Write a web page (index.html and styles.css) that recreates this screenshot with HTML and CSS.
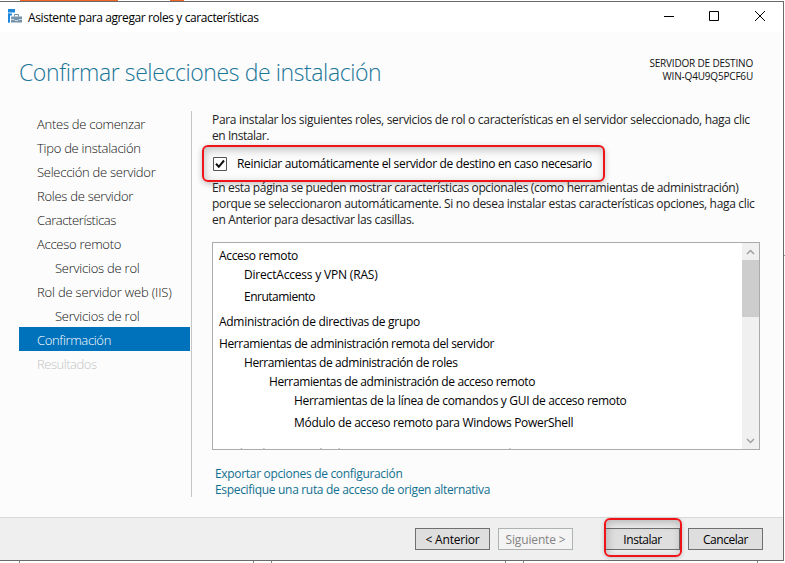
FILE: index.html
```html
<!DOCTYPE html>
<html lang="es">
<head>
<meta charset="utf-8">
<title>Asistente para agregar roles y características</title>
<link rel="stylesheet" href="styles.css">
</head>
<body>
<div class="desktop-top"><i class="tab"></i><i class="dot"></i></div>
<main class="window">
  <header class="titlebar">
    <svg class="app-icon" width="16" height="16" viewBox="0 0 16 16">
      <path d="M1 0h7v3.5h-7zM1 4.5h4v9h-4z" fill="#1f87dc"/>
      <path d="M2.5 6.5h4v-2h6v2h3.500v7.500h-13.500z" fill="#fff"/>
      <path d="M1 4.500h2v9h-2z" fill="#1f87dc"/>
      <path d="M7.500 7.500v-2h4v2" fill="none" stroke="#6f8fa8"/>
      <path d="M4.500 7.500h10.500v6h-11v-4.500z" fill="#7492aa"/>
      <path d="M4 10.500h3l1 1h3l1-1h3" fill="none" stroke="#e6edf2" stroke-width=".8"/>
    </svg>
    <h1 class="caption ls-40">Asistente para agregar roles y características</h1>
    <svg class="controls" width="104" height="12" viewBox="0 0 104 12" fill="none" stroke="#000">
      <path d="M1 6.5h10"/><path d="M46.5 1.5h9v9h-9z"/><path d="M92 1l10 10M102 1l-10 10"/>
    </svg>
  </header>
  <section class="head">
    <h2 class="heading">Confirmar selecciones de instalación</h2>
    <div class="target"><p class="ls-18">SERVIDOR DE DESTINO</p><p class="ls-18">WIN-Q4U9Q5PCF6U</p></div>
  </section>
  <section class="body">
    <nav class="steps">
      <a>Antes de comenzar</a>
      <a>Tipo de instalación</a>
      <a>Selección de servidor</a>
      <a>Roles de servidor</a>
      <a class="ls-40">Características</a>
      <a>Acceso remoto</a>
      <a class="sub">Servicios de rol</a>
      <a class="ls-19">Rol de servidor web (IIS)</a>
      <a class="sub">Servicios de rol</a>
      <a class="active">Confirmación</a>
      <a class="disabled">Resultados</a>
    </nav>
    <div class="page">
      <p class="para"><span class="ls-31">Para instalar los siguientes roles, servicios de rol o características en el servidor seleccionado, haga clic</span><br><span class="ls-44">en Instalar.</span></p>
      <label class="restart">
        <svg width="14" height="14" viewBox="0 0 14 14"><path d="M.5.5h13v13H.5z" fill="#fff" stroke="#555"/><path d="M3 6.8l2.8 3L11 3.500" fill="none" stroke="#111" stroke-width="2"/></svg>
        <span class="ls-33">Reiniciar automáticamente el servidor de destino en caso necesario</span>
      </label>
      <p class="para"><span class="ls-35">En esta página se pueden mostrar características opcionales (como herramientas de administración)</span><br><span class="ls-33">porque se seleccionaron automáticamente. Si no desea instalar estas características opciones, haga clic</span><br><span class="ls-35">en Anterior para desactivar las casillas.</span></p>
      <div class="listbox">
        <ul class="tree">
          <li class="ls-33">Acceso remoto</li>
          <li class="l1 ls-19">DirectAccess y VPN (RAS)</li>
          <li class="l1 gap ls-50">Enrutamiento</li>
          <li class="gap-lg ls-29">Administración de directivas de grupo</li>
          <li class="gap ls-38">Herramientas de administración remota del servidor</li>
          <li class="l1 ls-39">Herramientas de administración de roles</li>
          <li class="l2 ls-37">Herramientas de administración de acceso remoto</li>
          <li class="l3 ls-32">Herramientas de la línea de comandos y GUI de acceso remoto</li>
          <li class="l3 gap ls-31">Módulo de acceso remoto para Windows PowerShell</li>
          <li class="cut ls-33">Kit de administración de Connection Manager (CMAK) de RAS</li>
        </ul>
        <div class="scrollbar">
          <svg width="17" height="17" viewBox="0 0 17 17"><path d="M5 11l3.5-3.5 3.5 3.5" fill="none" stroke="#a0a0a0" stroke-width="1.5"/></svg>
          <i class="thumb"></i>
          <svg class="down" width="17" height="17" viewBox="0 0 17 17"><path d="M5 7l3.5 3.5 3.5-3.5" fill="none" stroke="#a0a0a0" stroke-width="1.5"/></svg>
        </div>
      </div>
      <div class="links"><a>Exportar opciones de configuración</a><a>Especifique una ruta de acceso de origen alternativa</a></div>
    </div>
  </section>
  <footer class="footer">
    <button class="ls-20">&lt; Anterior</button>
    <button class="off ls-15">Siguiente &gt;</button>
    <span class="primary"><button class="ls-46">Instalar</button></span>
    <button class="ls-46">Cancelar</button>
  </footer>
</main>
<div class="desktop-side"></div>
<div class="desktop-bottom"><i></i><i></i><i></i><i></i><i></i><i></i></div>
</body>
</html>
```
FILE: styles.css
```css
*, *::after { box-sizing: border-box; }
body {
  margin: 0; width: 785px; height: 563px; overflow: hidden; background: #fff;
  font: 12px/16px "Open Sans", "Noto Sans", sans-serif; color: #222;
  display: grid; grid-template: 1px 560px 2px / 784px 1px;
}
h1, h2, p, ul { margin: 0; padding: 0; font-weight: 400; list-style: none; }

.desktop-top { grid-column: 1 / 3; display: flex; padding-left: 20px; }
.tab { width: 98px; background: #f26522; }
.dot { width: 14px; margin-left: 52px; background: #f26522; }
.desktop-side { border-bottom: 1px solid #999; height: 255px; }
.desktop-bottom { grid-column: 1 / 3; display: flex; padding-left: 19px; }
.desktop-bottom i { flex: none; border-left: 1px solid #888; width: 234px; }
.desktop-bottom i:nth-child(even) { width: 18px; }
.desktop-bottom i:last-child { width: 1px; }

.window {
  display: flex; flex-direction: column; background: #fcfcfc;
  border: solid #6a6a6a; border-width: 1px 1px 1px 0;
}
.titlebar { height: 30px; background: #fff; display: flex; align-items: center; padding: 0 16px 0 7px; color: #000; }
.controls { margin-top: -2px; }
.caption { font-size: 12px; margin-left: 5px; flex: 1; padding-top: 1px; }

.head { display: flex; justify-content: space-between; height: 79px; padding: 25px 30px 0 19px; }
.heading { font-size: 23px; line-height: 30px; font-weight: 300; letter-spacing: -.4px; color: #1a7597; }
.target { font-size: 10px; line-height: 13px; text-align: right; color: #111; }

.body { display: flex; height: 406px; }
.steps {
  width: 192px; height: 386px; margin-right: 20px; padding: 0 1px 0 19px;
  border-right: 1px solid #c6c6c6; font-size: 13px; font-weight: 300; letter-spacing: -.27px; color: #111;
}
.steps a { display: block; height: 24px; line-height: 26px; padding-left: 18px; white-space: nowrap; }
.steps .sub { padding-left: 36px; letter-spacing: -.234px; }
.steps .active { background: #0072bc; color: #fff; letter-spacing: -.34px; }
.steps .disabled { color: #c4c4c4; letter-spacing: -.47px; }

.page { width: 548px; padding-top: 1px; white-space: nowrap; }
.restart {
  display: flex; align-items: center; gap: 10px; width: 403px; height: 37px; margin: 1px 0 -2px -10px;
  padding: 1px 0 0 9px; border: 2px solid #f01418; border-radius: 6px; color: #000;
  box-shadow: 0 2px 6px rgba(0,0,0,.24), inset 1px 3px 9px rgba(0,0,0,.24);
}
.listbox { display: flex; height: 208px; margin-top: 14px; border: 1px solid #ababab; background: #fff; overflow: hidden; color: #000; }
.tree { flex: 1; padding: 5px 0 0 6px; overflow: hidden; }
.tree li { height: 16px; margin-bottom: 3px; }
.tree .l1 { padding-left: 25px; }
.tree .l2 { padding-left: 50px; }
.tree .l3 { padding-left: 75px; }
.tree .gap { margin-top: 6px; }
.tree .gap-lg { margin-top: 9px; }
.tree .cut { margin-top: 15px; color: #aaa; }
.scrollbar { width: 17px; background: #f0f0f0; display: flex; flex-direction: column; }
.thumb { height: 57px; background: #cdcdcd; }
.down { margin-top: auto; }
.links { margin-top: 16px; padding-left: 3px; color: #10708f; letter-spacing: -.318px; }
.links a { display: block; }

.footer {
  flex: 1; display: flex; align-items: flex-start; padding: 10px 20px 0 0; justify-content: flex-end;
  background: #efefef; border-top: 1px solid #d9d9d9;
}
button {
  display: block; width: 75px; height: 22px; padding: 2px 0 0; border: 1px solid #707070; background: #dedede;
  font: inherit; line-height: 18px; color: #000; margin: 0 0 0 8px;
}
.off { background: #f4f4f4; border-color: #adb2b5; color: #838383; }
.primary { position: relative; margin-left: 24px; }
.primary::after {
  content: ""; position: absolute; left: 7px; top: -10px; width: 78px; height: 39px;
  border: 2px solid #f01418; border-radius: 6px;
  box-shadow: 0 1px 4px rgba(0,0,0,.2), inset 1px 3px 9px rgba(0,0,0,.24);
}

.ls-15 { letter-spacing: -.146px; }
.ls-18 { letter-spacing: -.184px; }
.steps .ls-19, .ls-19 { letter-spacing: -.19px; }
.ls-20 { letter-spacing: -.2px; }
.ls-29 { letter-spacing: -.292px; }
.ls-31 { letter-spacing: -.31px; }
.ls-32 { letter-spacing: -.321px; }
.ls-33 { letter-spacing: -.334px; }
.ls-35 { letter-spacing: -.353px; }
.ls-37 { letter-spacing: -.372px; }
.ls-38 { letter-spacing: -.379px; }
.ls-39 { letter-spacing: -.389px; }
.ls-40 { letter-spacing: -.402px; }
.ls-44 { letter-spacing: -.445px; }
.ls-46 { letter-spacing: -.46px; }
.ls-50 { letter-spacing: -.497px; }
```
